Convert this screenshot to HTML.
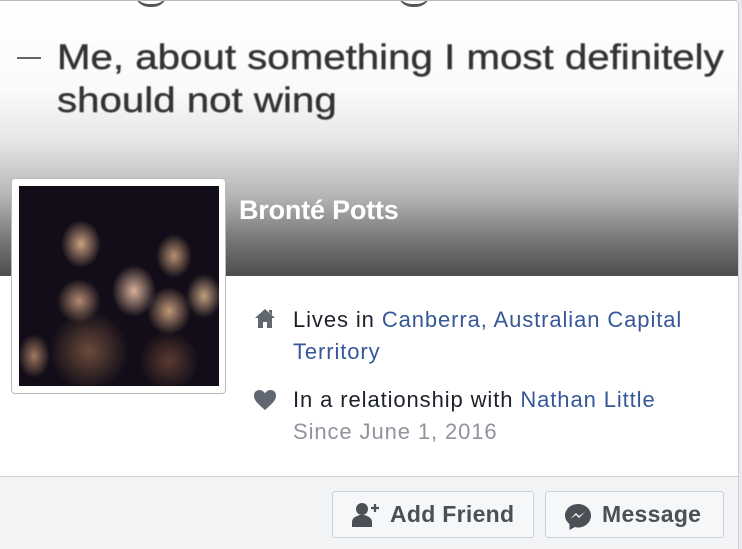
<!DOCTYPE html>
<html><head><meta charset="utf-8"><style>
*{margin:0;padding:0;box-sizing:border-box}
body{width:742px;height:549px;overflow:hidden;background:#e9ebee;font-family:"Liberation Sans",Arial,sans-serif;position:relative}
.card{position:absolute;left:0;top:0;width:739px;height:549px;background:#fff;border-right:1px solid #ccc;border-top:1px solid #bbb;border-top-right-radius:5px;overflow:hidden}
.cover{position:absolute;left:0;top:0;width:739px;height:275px;background:linear-gradient(to bottom,#fff 0px,#fafafa 90px,#e6e6e6 140px,#b5b5b5 195px,#7c7c7c 235px,#4c4c4c 275px)}
.q{position:absolute;left:57px;color:#333;font-size:35px;white-space:nowrap;filter:blur(0.5px);transform:scaleX(1.15);transform-origin:0 0;-webkit-text-stroke:0.4px #333}
.dash{position:absolute;left:17px;top:56px;width:24px;height:2px;background:#666}
.photo{position:absolute;left:11px;top:177px;width:215px;height:216px;background:#fff;border:1px solid #bbb;border-radius:4px;padding:7px}
.img{width:200px;height:200px;background:
radial-gradient(ellipse 22px 26px at 115px 105px,#d9b09a,transparent),
radial-gradient(ellipse 20px 24px at 62px 58px,#c9a080,transparent),
radial-gradient(ellipse 18px 22px at 155px 70px,#b89070,transparent),
radial-gradient(ellipse 22px 22px at 60px 115px,#b48a70,transparent),
radial-gradient(ellipse 22px 24px at 150px 125px,#c09878,transparent),
radial-gradient(ellipse 18px 22px at 185px 110px,#c0a080,transparent),
radial-gradient(ellipse 16px 22px at 15px 170px,#a07860,transparent),
radial-gradient(ellipse 40px 40px at 70px 165px,#6a4a3a,transparent),
radial-gradient(ellipse 30px 30px at 150px 175px,#5a3a30,transparent),
#120d18}
.name{position:absolute;left:239px;top:194px;color:#fff;font-weight:bold;font-size:27px;letter-spacing:-0.2px}
.row{position:absolute;left:293px;font-size:22px;letter-spacing:0.9px;color:#1d2129;line-height:32px}
a{color:#365899;text-decoration:none}
.foot{position:absolute;left:0;top:475px;width:739px;height:74px;background:#f2f3f5;border-top:1px solid #ccd0d5}
.btn{position:absolute;top:14px;height:47px;border:1px solid #ccd0d5;border-radius:3px;background:#f6f7f9;font-weight:bold;font-size:23px;color:#4b4f56;line-height:45px;letter-spacing:0.3px}
</style></head><body>
<div class="card">
<div class="cover">
<div style="position:absolute;left:135px;top:-8px;width:32px;height:14px;border-bottom:3px solid #555;border-radius:0 0 16px 16px"></div>
<div style="position:absolute;left:398px;top:-8px;width:32px;height:14px;border-bottom:3px solid #555;border-radius:0 0 16px 16px"></div>
<div class="dash"></div>
<div class="q" style="top:37px">Me, about something I most definitely</div>
<div class="q" style="top:80px">should not wing</div>
</div>
<div class="photo"><div class="img"></div></div>
<div class="name">Bronté Potts</div>
<svg style="position:absolute;left:253px;top:306px" width="24" height="24" viewBox="0 0 24 24"><path d="M12 2 L2 11 H5 V21 H10 V15 H14 V21 H19 V11 H22 Z M16 3 H19 V8 L16 5Z" fill="#606770"/></svg>
<div class="row" style="top:303px">Lives in <a>Canberra, Australian Capital<br>Territory</a></div>
<svg style="position:absolute;left:253px;top:388px" width="24" height="22" viewBox="0 0 24 22"><path d="M12 21 C4 14 1 11 1 6.5 C1 3 3.5 1 6.5 1 C9 1 11 2.5 12 4.5 C13 2.5 15 1 17.5 1 C20.5 1 23 3 23 6.5 C23 11 20 14 12 21Z" fill="#606770"/></svg>
<div class="row" style="top:383px">In a relationship with <a>Nathan Little</a><br><span style="color:#90949c">Since June 1, 2016</span></div>
<div class="foot">
<div class="btn" style="left:332px;width:202px;padding-left:57px">Add Friend
<svg style="position:absolute;left:18px;top:10px" width="30" height="26" viewBox="0 0 30 26"><circle cx="11" cy="7" r="6" fill="#4b4f56"/><path d="M1 25 V20 C1 16 5 14 9 13 H13 C17 14 21 16 21 20 V25Z" fill="#4b4f56"/><path d="M24 2 V10 M20 6 H28" stroke="#4b4f56" stroke-width="2.2"/></svg></div>
<div class="btn" style="left:545px;width:179px;padding-left:56px">Message
<svg style="position:absolute;left:18px;top:11px" width="28" height="28" viewBox="0 0 28 28"><path d="M14 1 C7 1 1 6 1 12.5 C1 16 3 19 5.5 21 V27 L11 24 C12 24.3 13 24.5 14 24.5 C21 24.5 27 19.3 27 12.5 C27 6 21 1 14 1Z" fill="#4b4f56"/><path d="M6 16 L12 10 L15 13 L21 9 L15 15 L12 12Z" fill="#f6f7f9"/></svg></div>
</div>
</div>
</body></html>
